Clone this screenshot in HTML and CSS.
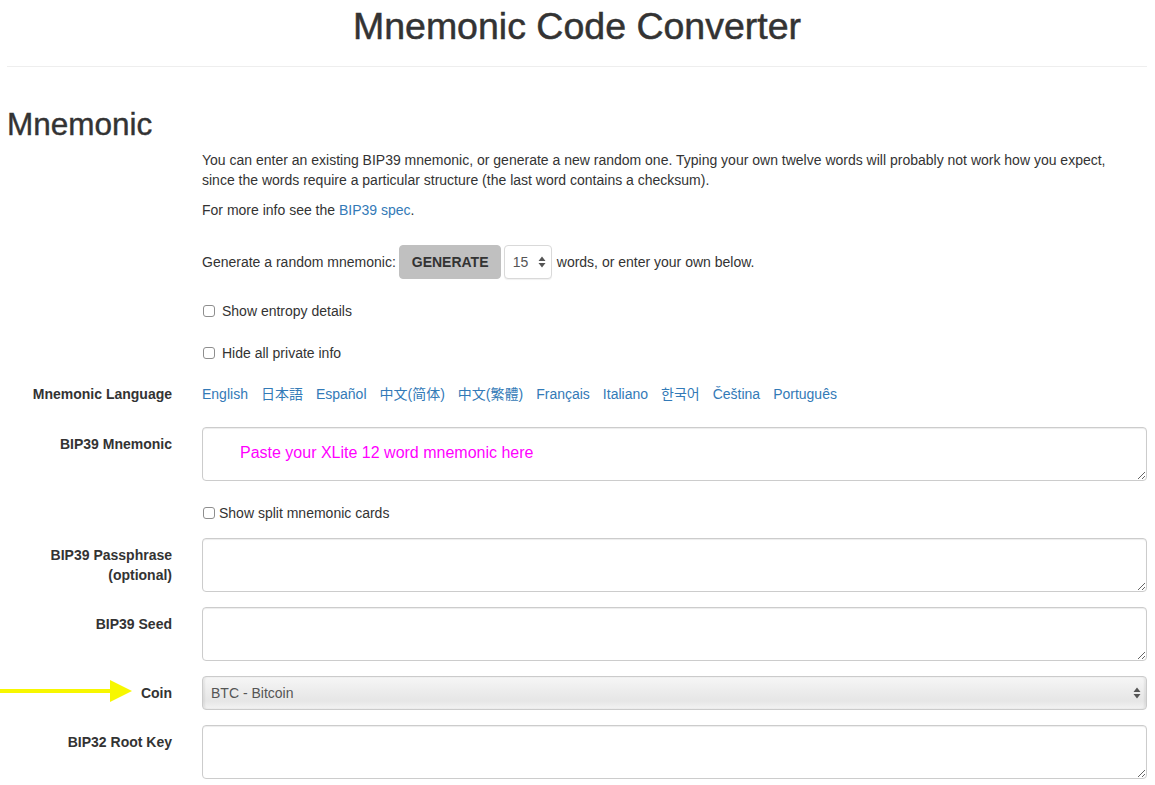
FILE: index.html
```html
<!DOCTYPE html>
<html lang="en">
<head>
<meta charset="utf-8">
<title>Mnemonic Code Converter</title>
<link rel="stylesheet" href="styles.css">
</head>
<body>
<div class="page">
  <header class="masthead">
    <h1 class="title">Mnemonic Code Converter</h1>
    <hr class="rule">
  </header>

  <h2 class="section-title">Mnemonic</h2>

  <form class="form">
    <div class="row">
      <div class="ctl intro">
        <p>You can enter an existing BIP39 mnemonic, or generate a new random one. Typing your own twelve words will probably not work how you expect,<br>since the words require a particular structure (the last word contains a checksum).</p>
        <p>For more info see the <a href="#" class="link">BIP39 spec</a>.</p>
      </div>
    </div>

    <div class="row gen-row">
      <div class="ctl gen">
        <span>Generate a random mnemonic:</span>
        <button type="button" class="btn-generate">GENERATE</button>
        <span class="mini-select">
          <select class="strength"><option>15</option></select>
          <svg class="updown" width="8" height="12" viewBox="0 0 8 12"><path d="M4 0.5 L7.5 5 L0.5 5 Z M4 11.5 L7.5 7 L0.5 7 Z" fill="#555"/></svg>
        </span>
        <span>words, or enter your own below.</span>
      </div>
    </div>

    <div class="row check-row first-check">
      <label class="ctl check"><input type="checkbox" class="cb"> Show entropy details</label>
    </div>

    <div class="row check-row">
      <label class="ctl check"><input type="checkbox" class="cb"> Hide all private info</label>
    </div>

    <div class="row lang-row">
      <div class="label">Mnemonic Language</div>
      <div class="languages">
        <a href="#" class="link">English</a>
        <a href="#" class="link">日本語</a>
        <a href="#" class="link">Español</a>
        <a href="#" class="link">中文(简体)</a>
        <a href="#" class="link">中文(繁體)</a>
        <a href="#" class="link">Français</a>
        <a href="#" class="link">Italiano</a>
        <a href="#" class="link">한국어</a>
        <a href="#" class="link">Čeština</a>
        <a href="#" class="link">Português</a>
      </div>
    </div>

    <div class="row field-row mnemonic-row">
      <label class="label">BIP39 Mnemonic</label>
      <textarea class="field phrase" placeholder="Paste your XLite 12 word mnemonic here"></textarea>
    </div>

    <div class="row check-row split-row">
      <label class="ctl check tight"><input type="checkbox" class="cb"> Show split mnemonic cards</label>
    </div>

    <div class="row field-row passphrase-row">
      <label class="label">BIP39 Passphrase<br>(optional)</label>
      <textarea class="field"></textarea>
    </div>

    <div class="row field-row">
      <label class="label">BIP39 Seed</label>
      <textarea class="field"></textarea>
    </div>

    <div class="row field-row coin-row">
      <svg class="pointer" width="132" height="22" viewBox="0 0 132 22"><rect x="0" y="9" width="112" height="4" fill="#f7f700"/><polygon points="110,0 132,11 110,22" fill="#f7f700"/></svg>
      <label class="label">Coin</label>
      <span class="coin-wrap">
        <select class="coin"><option>BTC - Bitcoin</option></select>
        <svg class="updown coin-arrows" width="8" height="12" viewBox="0 0 8 12"><path d="M4 0.5 L7.5 5 L0.5 5 Z M4 11.5 L7.5 7 L0.5 7 Z" fill="#555"/></svg>
      </span>
    </div>

    <div class="row field-row">
      <label class="label">BIP32 Root Key</label>
      <textarea class="field"></textarea>
    </div>
  </form>
</div>
</body>
</html>
```

FILE: styles.css
```css
html, body {
  margin: 0;
  padding: 0;
  background: #fff;
}

body {
  font-family: "Liberation Sans", Arial, Helvetica, sans-serif;
  font-size: 14px;
  line-height: 20px;
  color: #333;
  overflow: hidden;
}

.page {
  padding: 0 8px 0 7px;
}

.masthead {
  text-align: center;
}

.title {
  margin: 6px 0 0;
  font-size: 37.5px;
  line-height: 1.1;
  font-weight: 400;
  color: #333;
  -webkit-text-stroke: 0.5px #333;
}

.rule {
  margin: 19px 0 20px;
  border: 0;
  border-top: 1px solid #eee;
  height: 0;
}

.section-title {
  margin: 40px 0 8px;
  font-size: 31.5px;
  line-height: 1.1;
  font-weight: 400;
  color: #333;
  -webkit-text-stroke: 0.4px #333;
}

.form {
  margin: 0;
}

.row {
  display: grid;
  grid-template-columns: 165px 1fr;
  column-gap: 30px;
  position: relative;
}

.ctl {
  grid-column: 2;
}

.intro p {
  margin: 0 0 10px;
}

.link {
  color: #337ab7;
  text-decoration: none;
}

.gen-row {
  margin-top: 15px;
}

.gen {
  display: flex;
  align-items: center;
  height: 34px;
}

.btn-generate {
  margin: 0 3px 0 3px;
  height: 34px;
  padding: 0 12px;
  border: 1px solid #c0c0c0;
  border-radius: 4px;
  background: #c0c0c0;
  color: #333;
  font-family: "Liberation Sans", Arial, Helvetica, sans-serif;
  font-size: 14px;
  font-weight: 700;
  width: 102px;
}

.mini-select {
  position: relative;
  display: inline-block;
  margin-right: 5px;
}

.strength {
  appearance: none;
  -webkit-appearance: none;
  width: 48px;
  height: 34px;
  border: 1px solid #d9d9d9;
  border-radius: 4px;
  background: #fff;
  padding: 0 0 0 8px;
  font-family: "Liberation Sans", Arial, Helvetica, sans-serif;
  font-size: 14px;
  color: #555;
  box-shadow: 0 1px 1px rgba(0, 0, 0, 0.06);
  display: block;
}

.updown {
  position: absolute;
  right: 6px;
  top: 11px;
  pointer-events: none;
}

.check-row {
  margin-top: 22px;
}

.check {
  display: flex;
  align-items: center;
  height: 20px;
  cursor: pointer;
}

.cb {
  appearance: none;
  -webkit-appearance: none;
  width: 12px;
  height: 12px;
  margin: 0 7px 0 1px;
  border: 1px solid #8e8e8e;
  border-radius: 3px;
  background: #fff;
}

.tight .cb {
  margin-right: 4px;
}

.lang-row {
  margin-top: 21px;
}

.label {
  font-weight: 700;
  text-align: right;
  color: #333;
}

.languages {
  display: flex;
  flex-wrap: wrap;
  column-gap: 13px;
  font-family: "Liberation Sans", Arial, "Noto Sans CJK JP", "Noto Sans CJK KR", sans-serif;
}

.field-row {
  margin-top: 15px;
}

.field-row .label {
  padding-top: 7px;
}

.mnemonic-row {
  margin-top: 23px;
}

.field {
  display: block;
  box-sizing: border-box;
  width: 100%;
  height: 54px;
  margin: 0;
  padding: 6px 12px;
  border: 1px solid #ccc;
  border-radius: 4px;
  background: #fff;
  box-shadow: inset 0 1px 1px rgba(0, 0, 0, 0.075);
  font-family: "Liberation Sans", Arial, Helvetica, sans-serif;
  font-size: 14px;
  color: #555;
  resize: vertical;
}

.phrase {
  padding: 14px 12px 6px 37px;
  font-size: 16px;
  line-height: 22px;
}

.phrase::placeholder {
  color: #ff00ff;
  opacity: 1;
}

.coin-row .label {
  padding-top: 7px;
}

.coin-wrap {
  position: relative;
  display: block;
}

.coin {
  appearance: none;
  -webkit-appearance: none;
  display: block;
  box-sizing: border-box;
  width: 100%;
  height: 34px;
  margin: 0;
  padding: 0 8px;
  border: 1px solid #cbcbcb;
  border-radius: 4px;
  background: linear-gradient(to bottom, #f6f6f6 0%, #ececec 45%, #e6e6e6 75%, #f3f3f3 100%);
  box-shadow: inset 2px 0 2px rgba(0, 0, 0, 0.06), inset -2px 0 2px rgba(0, 0, 0, 0.06);
  font-family: "Liberation Sans", Arial, Helvetica, sans-serif;
  font-size: 14px;
  color: #555;
}

.coin-arrows {
  right: 6px;
  top: 11px;
}

.pointer {
  position: absolute;
  left: -7px;
  top: 4px;
}
```
